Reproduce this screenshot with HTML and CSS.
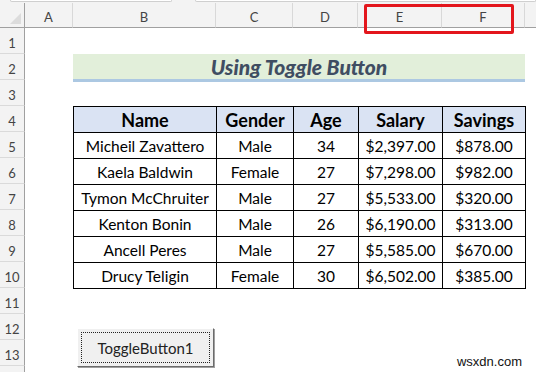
FILE: index.html
```html
<!DOCTYPE html>
<html lang="en">
<head>
  <meta charset="UTF-8">
  <title>Using Toggle Button</title>
  <link rel="stylesheet" href="styles.css">
</head>
<body>
  <div class="topbar">
    <div class="namebox"></div>
    <div class="formulabox"></div>
  </div>

  <div class="sheet">
    <!-- column headers -->
    <div class="corner"><span class="tri"></span></div>
    <div class="colhead">A</div>
    <div class="colhead">B</div>
    <div class="colhead">C</div>
    <div class="colhead">D</div>
    <div class="colhead">E</div>
    <div class="colhead">F</div>
    <div class="colhead last"></div>

    <!-- row headers -->
    <div class="rowhead" style="grid-row: 2">1</div>
    <div class="rowhead" style="grid-row: 3">2</div>
    <div class="rowhead" style="grid-row: 4">3</div>
    <div class="rowhead" style="grid-row: 5">4</div>
    <div class="rowhead" style="grid-row: 6">5</div>
    <div class="rowhead" style="grid-row: 7">6</div>
    <div class="rowhead" style="grid-row: 8">7</div>
    <div class="rowhead" style="grid-row: 9">8</div>
    <div class="rowhead" style="grid-row: 10">9</div>
    <div class="rowhead" style="grid-row: 11">10</div>
    <div class="rowhead" style="grid-row: 12">11</div>
    <div class="rowhead" style="grid-row: 13">12</div>
    <div class="rowhead" style="grid-row: 14">13</div>
    <div class="rowhead" style="grid-row: 15"></div>

    <div class="title">Using Toggle Button</div>

    <table class="data">
      <colgroup>
        <col style="width: 143px">
        <col style="width: 77px">
        <col style="width: 65px">
        <col style="width: 84px">
        <col>
      </colgroup>
      <thead>
        <tr><th>Name</th><th>Gender</th><th>Age</th><th>Salary</th><th>Savings</th></tr>
      </thead>
      <tbody>
        <tr><td>Micheil Zavattero</td><td>Male</td><td>34</td><td>$2,397.00</td><td>$878.00</td></tr>
        <tr><td>Kaela Baldwin</td><td>Female</td><td>27</td><td>$7,298.00</td><td>$982.00</td></tr>
        <tr><td>Tymon McChruiter</td><td>Male</td><td>27</td><td>$5,533.00</td><td>$320.00</td></tr>
        <tr><td>Kenton Bonin</td><td>Male</td><td>26</td><td>$6,190.00</td><td>$313.00</td></tr>
        <tr><td>Ancell Peres</td><td>Male</td><td>27</td><td>$5,585.00</td><td>$670.00</td></tr>
        <tr><td>Drucy Teligin</td><td>Female</td><td>30</td><td>$6,502.00</td><td>$385.00</td></tr>
      </tbody>
    </table>

    <button class="toggle" type="button"><span class="focus">ToggleButton1</span></button>
  </div>

  <div class="highlight"></div>
  <div class="watermark">wsxdn.com</div>
</body>
</html>
```

FILE: styles.css
```css
body {
  margin: 0;
  width: 536px;
  height: 372px;
  overflow: hidden;
  background: #fff;
  font-family: Lato, "Open Sans", sans-serif;
  position: relative;
}

.topbar {
  height: 3px;
  background: #f3f3f3;
  display: flex;
  gap: 23px;
  padding-left: 10px;
}

.namebox,
.formulabox {
  height: 1px;
  background: #fff;
  border: 1px solid #cfcfcf;
  border-top: none;
  border-radius: 0 0 3px 3px;
}

.namebox {
  width: 160px;
}

.formulabox {
  flex: 1;
}

.sheet {
  display: grid;
  grid-template-columns: 25px 48px 143px 77px 65px 84px 83px 1fr;
  grid-template-rows: 25px repeat(14, 26px);
  height: 369px;
  overflow: hidden;
}

.corner {
  background: #f3f3f3;
  border-bottom: 1px solid #a0a0a0;
  border-right: 1px solid #a0a0a0;
  position: relative;
}

.tri {
  position: absolute;
  right: 3px;
  bottom: 3px;
  width: 0;
  height: 0;
  border-left: 11px solid transparent;
  border-bottom: 11px solid #dcdcdc;
}

.colhead {
  background: #f3f3f3;
  border-bottom: 1px solid #a0a0a0;
  border-right: 1px solid #d8d8d8;
  color: #444;
  font-size: 13px;
  display: flex;
  align-items: center;
  justify-content: center;
  padding-top: 3px;
}

.colhead.last {
  border-right: none;
}

.rowhead {
  grid-column: 1;
  background: #f3f3f3;
  border-right: 1px solid #a0a0a0;
  border-bottom: 1px solid #dadada;
  color: #444;
  font-size: 13px;
  display: flex;
  align-items: center;
  justify-content: center;
  padding-top: 5px;
  box-sizing: border-box;
}

.title {
  grid-row: 3;
  grid-column: 3 / 8;
  height: 25px;
  background: #e2efda;
  border-bottom: 3px solid #acc8e2;
  color: #3f4d62;
  font-size: 21px;
  font-weight: 900;
  font-style: italic;
  text-align: center;
  line-height: 26px;
}

.data {
  grid-row: 5 / 12;
  grid-column: 3 / 8;
  border-collapse: collapse;
  width: 453px;
  table-layout: fixed;
  font-size: 15.5px;
  color: #000;
}

.data th,
.data td {
  border: 1px solid #000;
  height: 25px;
  padding: 0;
  text-align: center;
  white-space: nowrap;
}

.data th {
  background: #dae3f3;
  font-size: 18px;
  font-weight: bold;
}

.toggle {
  grid-row: 13 / 15;
  grid-column: 3;
  align-self: start;
  margin: 14px 0 0 4px;
  width: 137px;
  height: 39px;
  padding: 3px;
  background: #f0f0f0;
  border: 1px solid;
  border-color: #fff #6b6b6b #6b6b6b #fff;
  box-shadow: 1px 1px 0 #a0a0a0;
  font-family: Lato, sans-serif;
  font-size: 15px;
  color: #222;
}

.focus {
  display: flex;
  align-items: center;
  justify-content: center;
  height: 100%;
  border: 1px dotted #222;
  box-sizing: border-box;
}

.highlight {
  position: absolute;
  left: 364px;
  top: 4px;
  width: 144px;
  height: 24px;
  border: 3px solid #e3161c;
  border-radius: 2px;
}

.watermark {
  position: absolute;
  right: 12px;
  bottom: 2px;
  padding: 1px 2px;
  background: #fff;
  font-family: "Liberation Sans", Arial, sans-serif;
  font-size: 13px;
  color: #111;
}
```
